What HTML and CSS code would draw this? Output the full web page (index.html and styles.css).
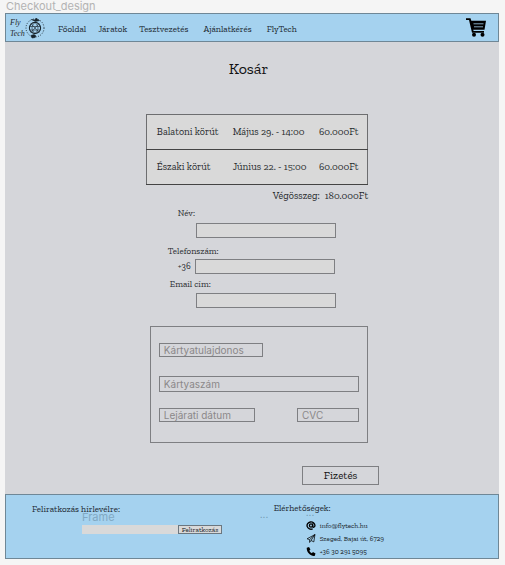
FILE: index.html
```html
<!DOCTYPE html>
<html lang="hu">
<head>
<meta charset="utf-8">
<meta name="viewport" content="width=device-width, initial-scale=1">
<title>Kosár</title>
<link rel="stylesheet" href="styles.css">
</head>
<body>
<div class="frame-name">Checkout_design</div>
<div class="page">
  <header class="header">
    <a class="brand" href="#" aria-label="Fly Tech">
      <span class="brand-name"><span>Fly</span><span>Tech</span></span>
      <svg class="brand-mark" viewBox="0 0 20 22" fill="none" stroke="#17232b">
        <circle cx="10" cy="11" r="9" stroke-width=".9" stroke-dasharray="1 1.500"/>
        <circle cx="10" cy="11" r="5.600" stroke-width="1.100"/>
        <path d="M10 5.400c-4 3-4 8 0 11.200c4-3 4-8 0-11.200M4.600 9.500h10.800M4.600 13h10.800M6 6.500l8 9M14 6.500l-8 9" stroke-width=".6"/>
        <path d="M6.500 2.500l3 .5 2-2 1 1.500 2 1-4 1zM6 18.500l3-1 2 1.500-1 1.500-3 .5z" fill="#17232b" stroke-width=".6"/>
      </svg>
    </a>
    <nav class="nav">
      <a href="#">Főoldal</a>
      <a href="#">Járatok</a>
      <a href="#">Tesztvezetés</a>
      <a class="nav-offer" href="#">Ajánlatkérés</a>
      <a href="#">FlyTech</a>
    </nav>
    <a class="cart-link" href="#" aria-label="Kosár">
      <svg viewBox="0 0 20 19">
        <path d="M0 .3h4.500l.8 2.500H20l-1.500 9H7.200l.4 1.200H18v1.700H6L3 2H0z"/>
        <path d="M7.500 5.800h10M8 8.800h9" stroke="#a5d2ef" stroke-width=".8"/>
        <circle cx="8" cy="16.700" r="2"/><circle cx="16.500" cy="16.700" r="2"/>
      </svg>
    </a>
  </header>

  <main class="main">
    <h1>Kosár</h1>
    <div class="content">
      <table class="basket">
        <tbody>
          <tr><td>Balatoni körút</td><td>Május 29. - 14:00</td><td>60.000Ft</td></tr>
          <tr><td>Északi körút</td><td>Június 22. - 15:00</td><td>60.000Ft</td></tr>
        </tbody>
      </table>
      <p class="total"><span>Végösszeg:</span><span>180.000Ft</span></p>

      <form class="order">
        <div class="field field-name">
          <label for="name">Név:</label>
          <div class="control"><input id="name" type="text"></div>
        </div>
        <div class="field field-phone">
          <label for="phone">Telefonszám:</label>
          <div class="control"><span class="prefix">+36</span><input id="phone" type="tel"></div>
        </div>
        <div class="field field-email">
          <label for="email">Email cím:</label>
          <div class="control"><input id="email" type="email"></div>
        </div>
        <div class="card">
          <input class="card-owner" type="text" placeholder="Kártyatulajdonos" aria-label="Kártyatulajdonos">
          <input class="card-number" type="text" placeholder="Kártyaszám" aria-label="Kártyaszám">
          <div class="card-row">
            <input class="card-date" type="text" placeholder="Lejárati dátum" aria-label="Lejárati dátum">
            <input class="card-cvc" type="text" placeholder="CVC" aria-label="CVC">
          </div>
        </div>
        <button class="pay" type="button">Fizetés</button>
      </form>
    </div>
  </main>

  <footer class="footer">
    <form class="newsletter">
      <label for="news">Feliratkozás hírlevélre:</label>
      <span class="frame-tag">Frame</span>
      <div class="subscribe">
        <input id="news" type="email">
        <button type="button">Feliratkozás</button>
      </div>
    </form>
    <section class="contact">
      <span class="dots dots-left">...</span>
      <span class="dots dots-right">...</span>
      <h2>Elérhetőségek:</h2>
      <ul>
        <li>
          <svg viewBox="0 0 16 16" fill="none" stroke="#000" stroke-width="2.400"><circle cx="8" cy="8" r="2.800"/><path d="M11 4.500v5c0 2.500 4 2 4-1.500a7 6.500 0 1 0-4 6"/></svg>
          <a href="#">info@flytech.hu</a>
        </li>
        <li>
          <svg viewBox="0 0 16 16" fill="none" stroke="#000" stroke-width="1.300" stroke-linejoin="round"><path d="M1 8.500L15 1l-2 13-5-2.500-2.500 3.500V10zM5.500 10L15 1 8 11.500"/></svg>
          <span>Szeged, Bajai út, 6729</span>
        </li>
        <li>
          <svg viewBox="0 0 16 16"><path d="M.5 1.500L4.500 0l2.500 4.500-2 2c1 2 2.500 3.500 4.500 4.500l2-2L16 11.500 14.500 16C7 16.500-.5 9 .5 1.500z"/></svg>
          <a href="#">+36 30 291 5095</a>
        </li>
      </ul>
    </section>
  </footer>
</div>
</body>
</html>
```

FILE: styles.css
```css
* { box-sizing: border-box; }

body {
  margin: 0;
  padding: 0 6px 6px 5px;
  background: #f5f5f5;
  color: #26292c;
  font: 9px/12px "Zilla Slab", "DejaVu Serif Condensed", "DejaVu Serif", serif;
}

a { color: inherit; text-decoration: none; }
h1, h2, p, ul { margin: 0; padding: 0; font-weight: 400; }
ul { list-style: none; }
svg { display: block; }

input, button {
  margin: 0;
  padding: 0;
  border: 1px solid #7e7f82;
  border-radius: 0;
  background: #d9d9d9;
  color: inherit;
  font: inherit;
  min-width: 0;
}

.frame-name {
  height: 13px;
  padding-left: 1px;
  color: #b3b3b3;
  font: 11px/12px Inter, sans-serif;
}

.page { background: #d5d6da; }

.header {
  display: flex;
  align-items: center;
  height: 29px;
  padding: 0 12px 0 4px;
  background: #a5d2ef;
  border: 1px solid #6f8796;
}

.brand { display: flex; gap: 2px; width: 48px; }
.brand-name {
  display: flex;
  flex-direction: column;
  width: 13px;
  font: italic 8px/11px "Liberation Serif", serif;
}
.brand-mark { width: 20px; height: 22px; }

.nav { display: flex; flex: 1; gap: 12px; padding-top: 3px; color: #17232b; }
.nav-offer { margin: 0 3px; }

.cart-link svg { width: 20px; height: 19px; }

.main { padding: 15px 0 9px; }
h1 { padding-right: 7px; font-size: 16px; line-height: 24px; text-align: center; color: #111; }

.content { width: 45%; margin: 33px auto 0; position: relative; left: 5px; }

.basket {
  width: 100%;
  border-collapse: collapse;
  border: 1px solid #6d6e70;
  background: #d9d9d9;
  table-layout: fixed;
  font-size: 10px;
}
.basket td { height: 35px; padding: 0; border-bottom: 1px solid #444; white-space: nowrap; }
.basket td:first-child { width: 39%; padding-left: 10px; }
.basket td:last-child { width: 22%; }

.total { display: flex; justify-content: flex-end; gap: 5px; margin-top: 5px; font-size: 10px; }

.order { padding-top: 5px; }
.field { margin-bottom: 7px; }
.field label { display: block; margin-bottom: 4px; }
.field-name label { padding-left: 32px; }
.field-phone label { padding-left: 22px; margin-bottom: 2px; }
.field-email label { padding-left: 24px; margin-bottom: 3px; }
.field-phone { margin-bottom: 4px; }
.control { display: flex; padding-left: 50px; }
.field-phone .control { padding-left: 32px; }
.prefix { width: 17px; line-height: 15px; }
.control input { width: 140px; height: 15px; }

.card {
  display: flex;
  flex-direction: column;
  align-items: flex-start;
  margin: 18px 0 0 4px;
  padding: 16px 8px 20px;
  border: 1px solid #7e7f82;
}
.card input {
  height: 14px;
  padding-left: 4px;
  background: transparent;
  font: 10px/12px Inter, sans-serif;
}
.card input::placeholder { color: #8b8889; opacity: 1; }
.card .card-owner { width: 52%; margin-bottom: 19px; }
.card .card-number { width: 100%; height: 16px; margin-bottom: 16px; }
.card-row { display: flex; justify-content: space-between; width: 100%; }
.card-row .card-date { width: 48%; }
.card-row .card-cvc { width: 31%; }

.pay {
  display: block;
  width: 77px;
  height: 19px;
  margin: 23px -11px 0 auto;
  background: transparent;
  color: #111;
  font-size: 11px;
}

.footer {
  display: grid;
  grid-template-columns: 54% 1fr;
  height: 65px;
  background: #a5d2ef;
  border: 1px solid #6f8796;
  color: #17232b;
}
.newsletter { position: relative; padding: 8px 0 0 26px; }
.newsletter label { display: block; }
.frame-tag {
  position: absolute;
  top: 16px;
  left: 76px;
  color: #81a8c2;
  font: 11px/13px Inter, sans-serif;
}
.subscribe { display: flex; margin: 10px 0 0 50px; }
.subscribe input { width: 96px; height: 9px; border: 0; }
.subscribe button {
  width: 44px;
  height: 9px;
  border-color: #6b7780;
  font-size: 7px;
  line-height: 7px;
}

.contact { position: relative; padding: 7px 0 0 2px; }
.contact h2 { font-size: 9px; line-height: 12px; }
.contact ul { margin: 5px 0 0 32px; }
.contact li { display: flex; align-items: center; gap: 4px; font-size: 7px; line-height: 13px; }
.contact svg { width: 10px; height: 9px; }
.dots { position: absolute; color: #6f95ae; font: 10px/8px Inter, sans-serif; }
.dots-left { top: 15px; left: -12px; }
.dots-right { top: 13px; left: 34px; }
```
